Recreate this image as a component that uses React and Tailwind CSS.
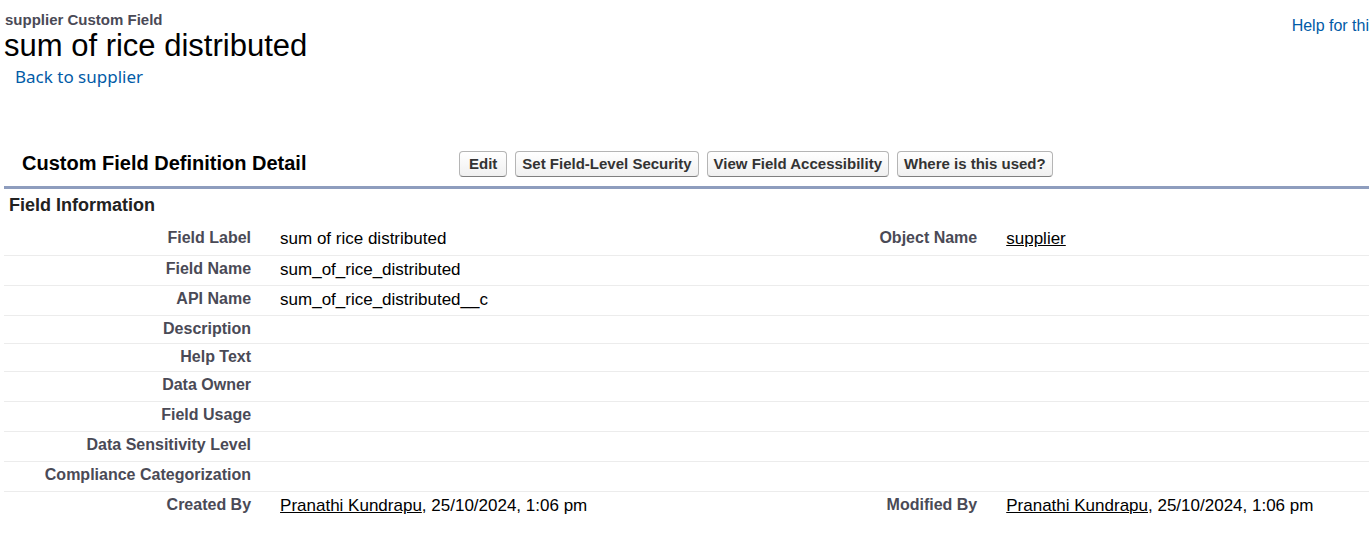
const person = (
  <>
    <a href="#user" className="underline">Pranathi Kundrapu</a>, 25/10/2024, 1:06 pm
  </>
);

const rows = [
  { label: 'Field Label', value: 'sum of rice distributed', label2: 'Object Name', value2: <a href="#supplier" className="underline">supplier</a> },
  { label: 'Field Name', value: 'sum_of_rice_distributed' },
  { label: 'API Name', value: 'sum_of_rice_distributed__c' },
  { label: 'Description', compact: true },
  { label: 'Help Text', compact: true },
  { label: 'Data Owner' },
  { label: 'Field Usage' },
  { label: 'Data Sensitivity Level' },
  { label: 'Compliance Categorization' },
  { label: 'Created By', value: person, label2: 'Modified By', value2: person, last: true },
];

const actions = ['Edit', 'Set Field-Level Security', 'View Field Accessibility', 'Where is this used?'];

function Label({ children }) {
  return (
    <th scope="row" className="p-0 pt-[3px] text-right align-top text-base leading-5 font-bold text-[#4a4a56]">
      {children}
    </th>
  );
}

function Value({ children }) {
  return <td className="p-0 pt-[3px] pl-[29px] align-top text-[17px] leading-[22px]">{children}</td>;
}

export default function App() {
  return (
    <div className="overflow-hidden bg-white pl-1 font-['Liberation_Sans',Arial,sans-serif] text-black">
      <header className="flex items-start justify-between pt-[10px]">
        <div>
          <p className="pl-px text-[15px] leading-5 font-bold text-[#4a4a56]">supplier Custom Field</p>
          <h1 className="text-[31px] leading-8">sum of rice distributed</h1>
          <a href="#back" className="block pl-[11px] font-['Noto_Sans',sans-serif] text-[17px] leading-[30px] text-[#015ba7]">
            Back to supplier
          </a>
        </div>
        <a href="#help" className="pt-[6px] text-base leading-5 whitespace-nowrap text-[#015ba7]">Help for thi</a>
      </header>

      <main className="pt-[59px]">
        <div className="flex items-start border-b-3 border-[#8e9dbe] pb-[9px]">
          <h2 className="w-[455px] shrink-0 pl-[18px] text-xl leading-6 font-bold">Custom Field Definition Detail</h2>
          <div className="flex gap-2">
            {actions.map((name) => (
              <button
                key={name}
                type="button"
                className="h-[26px] rounded border border-[#b5b5b5] border-b-[#7f7f7f] bg-linear-to-b from-white to-[#f0f0f0] px-[6px] text-[15px] leading-5 font-bold whitespace-nowrap text-[#333] first:px-[9px]"
              >
                {name}
              </button>
            ))}
          </div>
        </div>

        <h3 className="pt-1 pb-[7px] pl-[5px] text-lg leading-[25px] font-bold text-[#222]">Field Information</h3>

        <table className="w-full table-fixed border-collapse">
          <colgroup>
            <col className="w-[18.1%]" />
            <col className="w-[35%]" />
            <col className="w-[18.2%]" />
            <col />
          </colgroup>
          <tbody>
            {rows.map((row) => (
              <tr
                key={row.label}
                className={`${row.compact ? 'h-7' : 'h-[30px]'} ${row.last ? '' : 'border-b border-[#ececec]'}`}
              >
                <Label>{row.label}</Label>
                <Value>{row.value}</Value>
                {row.label2 ? <Label>{row.label2}</Label> : <td />}
                <Value>{row.value2}</Value>
              </tr>
            ))}
          </tbody>
        </table>
      </main>
    </div>
  );
}
